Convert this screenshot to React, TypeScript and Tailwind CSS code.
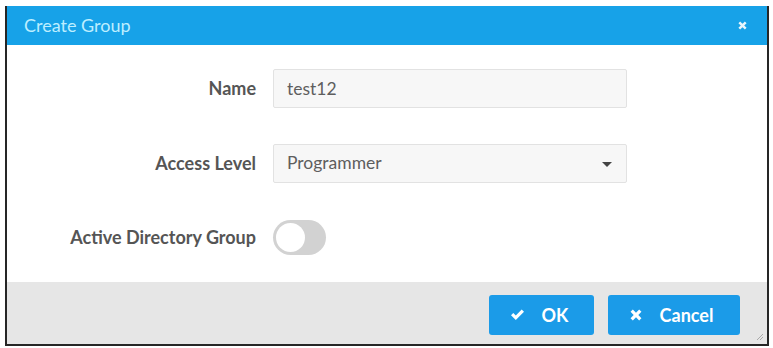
import React, { useState } from 'react';

// Small FontAwesome-like glyphs drawn inline
const CheckIcon = () => (
    <svg width="15" height="12" viewBox="0 0 15 12" className="fill-white">
        <path d="M1 6.2 L3.3 3.9 L5.8 6.4 L11.7 0.5 L14 2.8 L5.8 11 Z" />
    </svg>
);

const TimesIcon = ({ size = 11 }: { size?: number }) => (
    <svg width={size} height={size} viewBox="0 0 11 11" className="fill-white">
        <path d="M0.5 2.6 L2.6 0.5 L5.5 3.4 L8.4 0.5 L10.5 2.6 L7.6 5.5 L10.5 8.4 L8.4 10.5 L5.5 7.6 L2.6 10.5 L0.5 8.4 L3.4 5.5 Z" />
    </svg>
);

const Field: React.FC<{ label: string; children: React.ReactNode }> = ({ label, children }) => (
    <div className="flex items-center">
        <label className="w-[266px] pr-[17px] text-right text-[18px] font-bold text-[#555]">{label}</label>
        {children}
    </div>
);

export default function App() {
    const [name, setName] = useState('test12');
    const [adGroup, setAdGroup] = useState(false);

    return (
        <div className="w-[773px] h-[348px] bg-white pl-[5px] pt-[6px]" style={{ fontFamily: 'Lato, "Open Sans", sans-serif' }}>
            <div className="w-[764px] h-[340px] flex flex-col border-x-2 border-b-2 border-[#262626] bg-white">
                {/* Header */}
                <div className="h-[39px] shrink-0 bg-[#17a2e8] flex items-center justify-between pl-[17px] pr-[20px]">
                    <span className="text-[18px] text-[#bdeeff]">Create Group</span>
                    <button className="opacity-90"><TimesIcon size={9} /></button>
                </div>

                {/* Body */}
                <div className="flex-1 flex flex-col gap-[36px] pt-[24px]">
                    <Field label="Name">
                        <input
                            value={name}
                            onChange={(e) => setName(e.target.value)}
                            className="w-[354px] h-[39px] px-[13px] bg-[#f7f7f7] border border-[#e2e2e2] rounded-[2px] text-[17.5px] text-[#5e5e5e] outline-none"
                        />
                    </Field>
                    <Field label="Access Level">
                        <div className="relative w-[354px] h-[39px] px-[13px] bg-[#f7f7f7] border border-[#e2e2e2] rounded-[2px] flex items-center">
                            <span className="text-[17.5px] text-[#5e5e5e]">Programmer</span>
                            <span className="absolute right-[14px] top-[17px] w-0 h-0 border-x-[5px] border-x-transparent border-t-[5px] border-t-[#444]" />
                        </div>
                    </Field>
                    <div className="mt-[1px]">
                        <Field label="Active Directory Group">
                            <button
                                onClick={() => setAdGroup(!adGroup)}
                                className={`relative w-[53px] h-[35px] rounded-full ${adGroup ? 'bg-[#17a2e8]' : 'bg-[#d2d2d2]'}`}
                            >
                                <span className={`absolute top-[3px] w-[29px] h-[29px] rounded-full bg-white ${adGroup ? 'left-[21px]' : 'left-[3px]'}`} />
                            </button>
                        </Field>
                    </div>
                </div>

                {/* Footer */}
                <div className="relative h-[62px] shrink-0 bg-[#e6e6e6] flex justify-end gap-[14px] pt-[13px] pr-[27px]">
                    <button className="w-[105px] h-[40px] rounded-[3px] bg-[#1b9be8] flex items-center justify-center gap-[17px] text-white text-[18px] font-bold pr-[5px]">
                        <CheckIcon />
                        OK
                    </button>
                    <button className="w-[132px] h-[40px] rounded-[3px] bg-[#1b9be8] flex items-center justify-center gap-[18px] text-white text-[18px] font-bold pr-[5px]">
                        <TimesIcon size={12} />
                        Cancel
                    </button>
                    <svg width="8" height="8" viewBox="0 0 8 8" className="absolute right-[3px] bottom-[3px] stroke-[#aaa]">
                        <path d="M1 7 L7 1 M4 7 L7 4" strokeWidth="1" />
                    </svg>
                </div>
            </div>
        </div>
    );
}
